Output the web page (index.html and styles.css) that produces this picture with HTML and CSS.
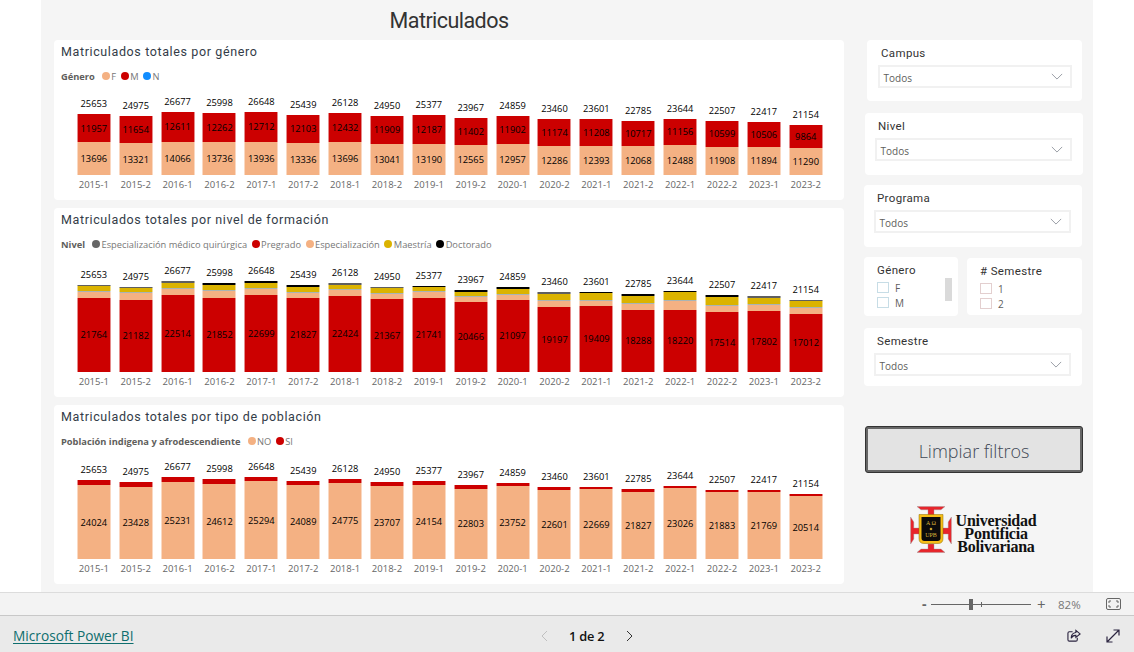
FILE: index.html
```html
<!DOCTYPE html>
<html lang="es">
<head>
<meta charset="utf-8">
<title>Matriculados</title>
<link rel="stylesheet" href="styles.css">
</head>
<body>
<main class="stage">
  <div class="canvas">
    <div class="charts">
      <h1 class="page-title">Matriculados</h1>
      <section class="card card-gender">
        <h2 class="card-title">Matriculados totales por género</h2>
        <div class="legend"><b>Género</b>
          <i class="dot peach"></i><span>F</span><i class="dot red"></i><span>M</span><i class="dot blue"></i><span>N</span>
        </div>
        <div class="plot" id="plot-gender"></div>
        <div class="axis"></div>
      </section>
      <section class="card card-level">
        <h2 class="card-title">Matriculados totales por nivel de formación</h2>
        <div class="legend"><b>Nivel</b>
          <i class="dot grey"></i><span>Especialización médico quirúrgica</span><i class="dot red"></i><span>Pregrado</span><i class="dot peach"></i><span>Especialización</span><i class="dot gold"></i><span>Maestría</span><i class="dot black"></i><span>Doctorado</span>
        </div>
        <div class="plot" id="plot-level"></div>
        <div class="axis"></div>
      </section>
      <section class="card card-pop">
        <h2 class="card-title">Matriculados totales por tipo de población</h2>
        <div class="legend"><b>Población indigena y afrodescendiente</b>
          <i class="dot peach"></i><span>NO</span><i class="dot red"></i><span>SI</span>
        </div>
        <div class="plot" id="plot-pop"></div>
        <div class="axis"></div>
      </section>
    </div>

    <aside class="filters">
      <div class="slicer s-campus">
        <div class="slicer-title">Campus</div>
        <div class="select"><span>Todos</span><svg class="chev" viewBox="0 0 14 8"><path d="M1 1l6 6 6-6"/></svg></div>
      </div>
      <div class="slicer s-nivel">
        <div class="slicer-title">Nivel</div>
        <div class="select"><span>Todos</span><svg class="chev" viewBox="0 0 14 8"><path d="M1 1l6 6 6-6"/></svg></div>
      </div>
      <div class="slicer s-programa">
        <div class="slicer-title">Programa</div>
        <div class="select"><span>Todos</span><svg class="chev" viewBox="0 0 14 8"><path d="M1 1l6 6 6-6"/></svg></div>
      </div>
      <div class="slicer-row">
        <div class="slicer s-genero">
          <div class="slicer-title">Género</div>
          <div class="check"><i class="box"></i><span>F</span></div>
          <div class="check"><i class="box"></i><span>M</span></div>
          <i class="scroll-thumb"></i>
        </div>
        <div class="slicer s-num">
          <div class="slicer-title"># Semestre</div>
          <div class="check"><i class="box pink"></i><span>1</span></div>
          <div class="check"><i class="box pink"></i><span>2</span></div>
        </div>
      </div>
      <div class="slicer s-semestre">
        <div class="slicer-title">Semestre</div>
        <div class="select"><span>Todos</span><svg class="chev" viewBox="0 0 14 8"><path d="M1 1l6 6 6-6"/></svg></div>
      </div>
      <button class="clear" type="button"><span>Limpiar filtros</span></button>
      <div class="logo">
        <svg class="crest" viewBox="0 0 42 47">
          <path fill="#e8242a" stroke="#999" stroke-width=".4" d="M7 .6h28l-4 3.2h-7v6h-6v-6h-7zM.6 11l3.2 5v6h6v6h-6v5l-3.2 5zM41.4 11l-3.2 5v6h-6v6h6v5l3.2 5zM18 38h6v5h7l4 3.4H7l4-3.4h7z"/>
          <path fill="#f6bd16" stroke="#8a6d00" stroke-width=".5" d="M9 8.500h24v24q0 5-5 5H14q-5 0-5-5z"/>
          <path fill="#0b0b0b" d="M11.500 11h19v21q0 3-3 3H14.500q-3 0-3-3z"/>
          <text class="crest-text" x="21" y="18.500" text-anchor="middle">Α Ω</text>
          <circle cx="21" cy="23" r="1.300" fill="#c9a02c"/>
          <text class="crest-text" x="21" y="31" text-anchor="middle">UPB</text>
        </svg>
        <div class="logo-text">Universidad Pontificia Bolivariana</div>
      </div>
    </aside>
  </div>
</main>

<div class="zoombar">
  <span class="zoom-sign">-</span>
  <div class="slider"><i class="tick"></i><i class="thumb"></i></div>
  <span class="zoom-sign plus">+</span>
  <span class="zoom-pct">82%</span>
  <svg class="fit" viewBox="0 0 15 12"><rect x=".5" y=".5" width="14" height="11" rx="1.500"/><path d="M3 5V3h2M10 3h2v2M12 7v2h-2M5 9H3V7"/></svg>
</div>

<footer class="footer">
  <a class="brand" href="#">Microsoft Power BI</a>
  <nav class="pager">
    <svg class="pg pg-off" viewBox="0 0 7 12"><path d="M6 1L1 6l5 5"/></svg>
    <span class="pg-text">1 de 2</span>
    <svg class="pg" viewBox="0 0 7 12"><path d="M1 1l5 5-5 5"/></svg>
  </nav>
  <div class="tools">
    <svg class="tool" viewBox="0 0 15 14"><path class="tool-navy" d="M6 2.500H2.500q-1.500 0-1.500 1.500v7q0 1.500 1.500 1.500h7q1.500 0 1.500-1.500V9"/><path class="tool-navy" d="M9.500 1l4.500 3.800-4.500 3.700V6.300Q6 6 4.500 9.500 4.500 4 9.500 3.300z"/></svg>
    <svg class="tool" viewBox="0 0 14 14"><path class="tool-navy" d="M1 13L13 1M7.500 1H13v5.500M1 7.500V13h5.500"/></svg>
  </div>
</footer>
<script src="app.js"></script>
</body>
</html>
```

FILE: styles.css
```css
* { box-sizing: border-box; }
html, body { margin: 0; height: 652px; overflow: hidden; background: #fff; }
body { display: flex; flex-direction: column; font-family: "Open Sans", "Liberation Sans", sans-serif; color: #252423; }

.stage { height: 593px; padding-left: 41px; flex: none; border-bottom: 1px solid #dcdcdc; }
.canvas { width: 1052px; height: 592px; background: #f5f5f5; display: flex; padding-left: 13px; }

.charts { width: 790px; flex: none; display: flex; flex-direction: column; gap: 8px; }
.page-title { margin: 0 0 -8px; height: 40px; font: 400 21.500px/42px Roboto, sans-serif; letter-spacing: -.55px; text-align: center; color: #333; }

.card { background: #fff; border-radius: 4px; padding-left: 7px; }
.card-gender { height: 160px; }
.card-level { height: 189px; }
.card-pop { height: 179px; }
.card-title { margin: 0; height: 24px; font: 400 12.500px/24px Roboto, sans-serif; letter-spacing: .62px; color: #333c48; white-space: nowrap; }

.legend { height: 24px; display: flex; align-items: center; font-size: 9.300px; color: #777; white-space: nowrap; }
.legend b { margin-right: 7px; color: #605e5c; font-weight: 700; }
.legend span { margin-right: 4.500px; }
.dot { width: 8px; height: 8px; border-radius: 50%; margin-right: 1.500px; flex: none; }
.dot.peach { background: #f4b183; }
.dot.red { background: #c00; }
.dot.blue { background: #118dff; }
.dot.grey { background: #666; }
.dot.gold { background: #dbb300; }
.dot.black { background: #000; }

.plot, .axis { display: grid; grid-template-columns: repeat(18, 41.880px); margin-left: 11.900px; }
.card-gender .plot { height: 87px; }
.card-level .plot { height: 116px; }
.card-pop .plot { height: 106px; }

.col { display: flex; flex-direction: column; justify-content: flex-end; align-items: center; min-width: 0; }
.total { font-size: 9.300px; line-height: 13px; margin-bottom: 4px; color: #000; }
.stack { width: 34px; display: flex; flex-direction: column; }
.seg { display: flex; align-items: center; justify-content: center; font-size: 9.300px; color: #000; line-height: 1; overflow: visible; flex: none; border-style: solid; border-width: 0 1px; }
.seg-red { background: #c00; border-color: #e58b8b; }
.seg-peach { background: #f4b183; border-color: #fad8c1; }
.seg-gold { background: #dbb300; border-color: #f1dd85; }
.seg-line { background: #a9b4b5; border-color: #d9dede; }
.seg-black { background: #000; border-color: #888; }
.seg-grey { background: #5f5f5f; border-color: #aaa; }

.axis span { text-align: center; font-size: 9.500px; line-height: 13px; padding-top: 3px; color: #666; }

.filters { margin-left: 20px; width: 220px; flex: none; padding-top: 40px; display: flex; flex-direction: column; }
.slicer { background: #fff; border-radius: 4px; position: relative; }
.slicer-title { font: 400 11.500px/14px Roboto, sans-serif; letter-spacing: .35px; color: #333; padding-left: 3px; }
.select { height: 23px; border: 2px solid #f1f1f1; margin-top: 5px; display: flex; align-items: center; justify-content: space-between; padding: 2px 7px 0 3.500px; font-size: 10px; color: #605e5c; }
.chev { width: 12px; height: 7px; fill: none; stroke: #8a8f98; stroke-width: 1; margin-top: -3px; }

.s-campus { margin-left: 3px; width: 215px; height: 61px; padding: 6px 10px 0 11px; }
.s-nivel { margin: 12px 0 0 1px; width: 218px; height: 62px; padding: 6px 11px 0 10px; }
.s-programa { margin-top: 10px; width: 218px; height: 62px; padding: 6px 11px 0 10px; }
.slicer-row { margin-top: 10px; display: flex; gap: 9px; width: 218px; }
.s-genero { width: 94px; height: 59px; padding: 6px 0 0 13px; }
.s-num { width: 115px; height: 57px; margin-top: 1px; padding: 6px 0 0 13px; }
.s-genero .slicer-title, .s-num .slicer-title { padding-left: 0; }
.s-semestre { margin-top: 12px; width: 218px; height: 58px; padding: 6px 11px 0 10px; }

.check { display: flex; align-items: center; height: 15px; font-size: 10px; color: #605e5c; }
.slicer-title + .check { margin-top: 3px; }
.box { width: 12px; height: 11px; border: 1px solid #c7dde6; margin-right: 6px; }
.box.pink { border-color: #e3cfcf; }
.scroll-thumb { position: absolute; left: 81px; top: 21px; width: 7px; height: 23px; background: #dadada; }

.clear { margin: 40px 0 0 1px; width: 218px; height: 47px; padding: 0; border: 1px solid #333; border-radius: 3px; background: #666; display: block; }
.clear span { display: block; margin: 2px; height: 41px; background: #e3e3e3; font: 300 18px/44px "Open Sans", sans-serif; color: #3f4855; }

.logo { margin: 33px 0 0 46px; display: flex; align-items: flex-start; gap: 3px; }
.crest { width: 42px; height: 47px; flex: none; }
.crest-text { font: 6px "Liberation Serif", serif; fill: #d9b13a; }
.logo-text { margin-top: 8px; text-align: center; font: 700 16px/13px "Liberation Serif", serif; color: #111; width: 82px; letter-spacing: -.25px; }

.zoombar { height: 23px; flex: none; background: #f3f3f3; border-bottom: 1px solid #c8c8c8; display: flex; align-items: center; padding-left: 922px; color: #666; }
.zoom-sign { font-size: 14px; font-weight: 700; line-height: 1; width: 9px; }
.zoom-sign.plus { font-weight: 400; margin-left: 6px; width: 11px; font-size: 15px; }
.slider { width: 100px; height: 1px; background: #666; position: relative; }
.thumb { position: absolute; left: 38px; top: -5px; width: 4px; height: 11px; background: #666; }
.tick { position: absolute; left: 50px; top: -2px; width: 1px; height: 5px; background: #666; }
.zoom-pct { font-size: 11.500px; margin-left: 10px; color: #777; }
.fit { width: 15px; height: 12px; margin-left: 25px; fill: none; stroke: #666; stroke-width: 1; }

.footer { flex: 1; background: #eaeaea; display: flex; align-items: center; position: relative; padding: 3px 14px 0 13px; }
.brand { font-size: 13.700px; color: #0e6e6e; text-decoration: underline; text-underline-offset: 2px; }
.pager { position: absolute; left: 541px; top: 11px; display: flex; align-items: center; }
.pg { width: 7px; height: 12px; fill: none; stroke: #333; stroke-width: 1; }
.pg-off { stroke: #c0c0c0; }
.pg-text { margin: 0 22px 0 21px; font-size: 12.800px; font-weight: 600; color: #111; letter-spacing: -.2px; }
.tools { margin-left: auto; display: flex; gap: 25px; }
.tool { width: 14px; height: 14px; fill: none; stroke-width: 1.200; }
.tool-navy { stroke: #2b2440; }
```

FILE: app.js
```javascript
var periods = ["2015-1","2015-2","2016-1","2016-2","2017-1","2017-2","2018-1","2018-2","2019-1","2019-2","2020-1","2020-2","2021-1","2021-2","2022-1","2022-2","2023-1","2023-2"];
var totals = [25653,24975,26677,25998,26648,25439,26128,24950,25377,23967,24859,23460,23601,22785,23644,22507,22417,21154];
var women = [13696,13321,14066,13736,13936,13336,13696,13041,13190,12565,12957,12286,12393,12068,12488,11908,11894,11290];
var men = [11957,11654,12611,12262,12712,12103,12432,11909,12187,11402,11902,11174,11208,10717,11156,10599,10506,9864];
var pregrado = [21764,21182,22514,21852,22699,21827,22424,21367,21741,20466,21097,19197,19409,18288,18220,17514,17802,17012];
var espec = [1860,1950,1950,2050,1760,1470,1660,1570,1660,1500,1650,1650,1550,1700,2550,1950,1850,1800];
var maestria = [1270,1270,1370,1370,1370,1470,1270,1370,1370,1250,1380,1850,2050,1950,2350,2350,1850,1650];
var topGrey = [1,1,1,0,0,0,1,1,0,0,0,1,0,0,0,0,1,1];
var no = [24024,23428,25231,24612,25294,24089,24775,23707,24154,22803,23752,22601,22669,21827,23026,21883,21769,20514];

function el(cls, text, tag) {
  var n = document.createElement(tag || "div");
  n.className = cls;
  if (text !== undefined) n.textContent = text;
  return n;
}

function seg(kind, value, scale, label) {
  var n = el("seg seg-" + kind, label ? String(value) : undefined);
  n.style.height = (value * scale) + "px";
  return n;
}

function draw(id, scale, segmentsFor) {
  var plot = document.getElementById(id);
  periods.forEach(function (p, i) {
    var col = el("col");
    col.appendChild(el("total", String(totals[i])));
    var stack = el("stack");
    segmentsFor(i).forEach(function (s) { stack.appendChild(seg(s[0], s[1], scale, s[2])); });
    col.appendChild(stack);
    plot.appendChild(col);
    plot.nextElementSibling.appendChild(el("", p, "span"));
  });
}

draw("plot-gender", 0.002378, function (i) {
  return [["red", men[i], true], ["peach", women[i], true]];
});

draw("plot-level", 0.003407, function (i) {
  var line = 250;
  var rest = Math.max(totals[i] - pregrado[i] - espec[i] - maestria[i] - line, 250);
  return [
    [topGrey[i] ? "grey" : "black", rest],
    ["gold", maestria[i]],
    ["line", line],
    ["peach", espec[i]],
    ["red", pregrado[i], true]
  ];
});

draw("plot-pop", 0.003068, function (i) {
  return [["red", totals[i] - no[i]], ["peach", no[i], true]];
});
```
